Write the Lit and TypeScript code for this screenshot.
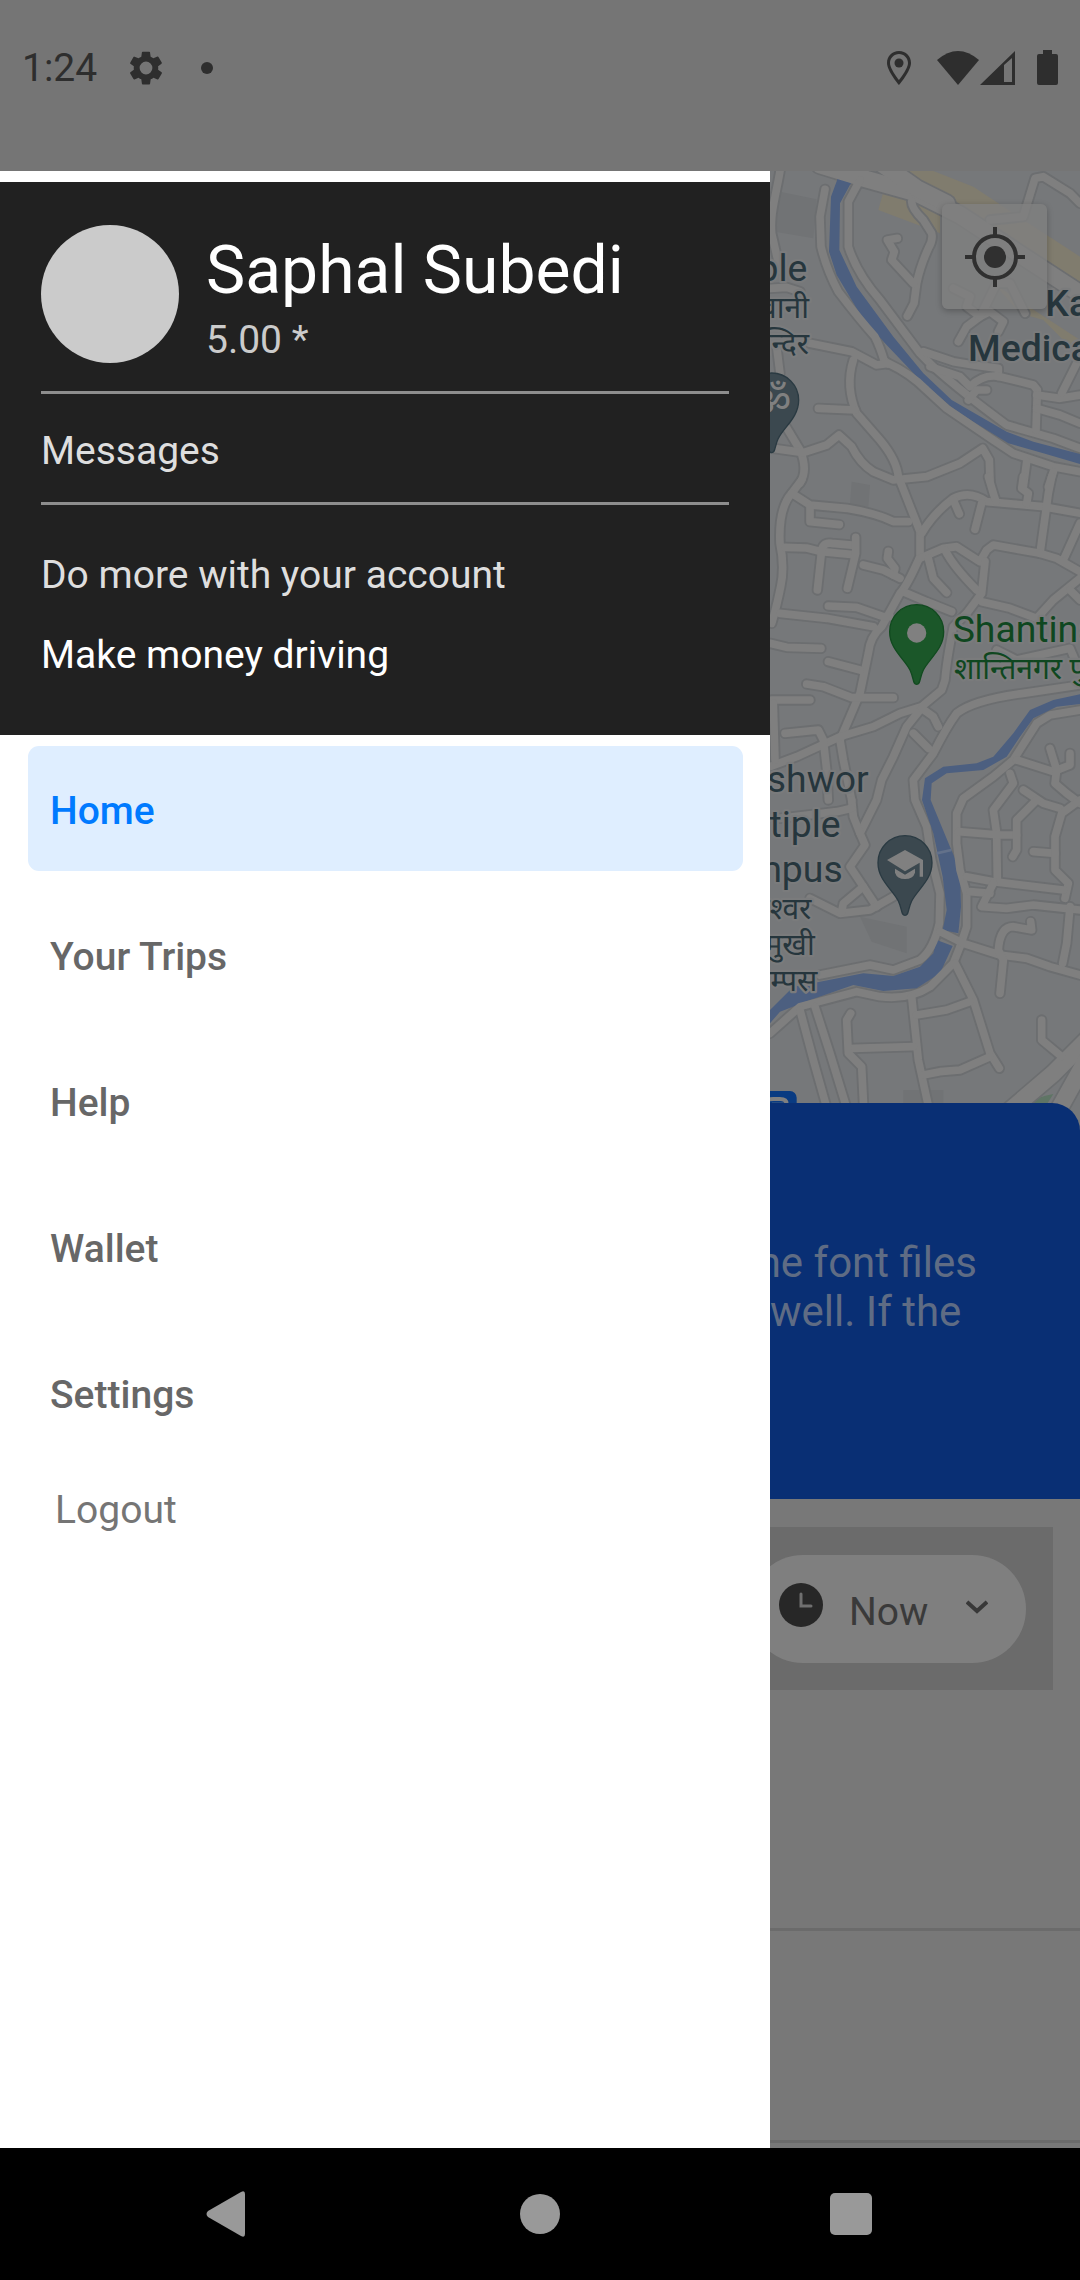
import { LitElement, html, svg, css } from "lit";
import { customElement, state } from "lit/decorators.js";

const ROADS = [
  // north
  "M60 33 C45 120 30 160 35 220 L60 330",
  "M195 88 L180 170 L183 260 Q200 330 235 395 Q300 480 345 530 Q360 560 372 600 L385 612",
  "M300 60 L265 125 L265 260 Q290 340 360 420 L480 580 L520 620 Q610 700 740 795 L880 835 L960 865",
  "M455 125 Q455 145 490 180 L515 220 Q520 240 505 265 Q480 320 470 370 L462 430 L442 468",
  "M412 235 L382 240 L403 275 L395 300 L460 370",
  "M150 550 L275 575 L350 615 L385 610 Q450 640 500 690 L560 745 L700 840 L760 880 L880 920 L960 935",
  "M280 600 Q255 680 290 760 L360 840 Q410 900 415 950",
  "M175 745 L285 750",
  "M60 770 L120 870 Q145 930 120 970",
  "M40 865 L130 878 L200 855 L237 825 L275 860 Q300 910 340 935 L400 960 L500 950 L600 910 L668 865 L688 900 L690 960",
  "M490 575 L580 605 L640 615 L715 625 L715 650",
  "M510 620 L600 650 L630 680 Q670 640 720 650 L820 675 L832 690 L828 810",
  "M830 705 L900 715 L960 705",
  "M830 745 L900 765 L960 790",
  "M960 590 L905 700",
  "M625 720 L650 690 L680 690",
  "M690 180 L790 170 L825 55 L850 50 L930 100 L960 130",
  "M800 905 L790 980",
  "M880 935 L865 980",
  "M595 545 L620 500 L660 470 L690 455 L730 485 L715 515",
  "M580 385 L630 410 L620 440 L660 470 L710 370 L750 370 L795 460",
  "M50 560 L60 640",
  "M30 385 L80 382 L120 395",
  // centre
  "M125 960 L95 1000 Q55 1045 60 1150 Q75 1220 62 1280 Q50 1340 35 1390",
  "M95 1000 L150 1035 L260 1045 Q350 1060 400 1085 L445 1085",
  "M415 950 L480 1115 L480 1190 Q440 1280 420 1300 L365 1400 Q330 1430 325 1480 L300 1600 L240 1740 L250 1800 L275 1920",
  "M150 1040 L150 1085 L238 1094",
  "M75 1162 L140 1164 L185 1175 L280 1184",
  "M172 1290 L185 1170 Q190 1145 215 1150 L285 1156",
  "M287 1132 L287 1180 L262 1285",
  "M385 1174 L382 1195 L405 1225 L400 1245",
  "M310 1215 L370 1230 L420 1255",
  "M205 1338 L290 1342 L370 1370 L390 1370",
  "M60 1360 L200 1375 L340 1400",
  "M30 1450 L80 1462 L183 1465",
  "M205 1505 L300 1530",
  "M140 1572 L190 1580 L275 1613 L400 1613",
  "M35 1620 L150 1620",
  "M485 1120 Q520 1060 580 1015 Q630 990 680 1025 L760 1032 L850 1040 L960 1060",
  "M580 1020 L598 1062",
  "M665 1030 L645 1108",
  "M685 950 L700 1000 L708 1025",
  "M790 950 L785 985 L805 1000 L800 1030",
  "M875 950 L865 1000 L840 1180",
  "M960 1090 L910 1200",
  "M480 1195 L550 1165 L590 1160 L660 1205 L680 1170 L700 1155 L840 1180 L890 1195 L960 1235",
  "M505 1195 L520 1255 L560 1298",
  "M555 1170 Q580 1220 650 1290",
  "M675 1205 L665 1300 L620 1360 L580 1400 Q560 1500 555 1560 L545 1590 L485 1640 L420 1660 L340 1700 L240 1730 L110 1790 L30 1820",
  "M665 1325 L750 1345 L830 1375 L880 1320 L960 1255",
  "M930 1290 L960 1320",
  "M430 1295 L500 1325 L575 1355",
  "M710 1470 L770 1500 L930 1465 L945 1500",
  "M960 1575 L790 1600 Q640 1620 590 1660 Q560 1700 520 1780 L460 1860 L465 1920 L500 2000 L515 2100 L540 2200 L538 2290 Q520 2370 480 2400 L400 2430 L330 2415 L180 2445",
  "M480 1650 L440 1700 L400 1790 L365 1860 L350 1920 L300 2020 L315 2055 L270 2120 L310 2180 L350 2240",
  "M485 1645 L520 1670 L535 1700",
  "M460 1720 L505 1765",
  "M75 1720 L175 1710 L190 1740 L200 1830 L205 1920",
  "M40 1630 L45 1800",
  "M960 1650 L870 1665 L830 1690 L760 1800 L700 1850 L610 1915 L590 1960 L590 2050 L600 2130 L620 2200 L620 2300 L600 2360 L580 2410 L510 2480 Q450 2520 360 2510 L290 2495 L120 2540 L30 2620",
  "M770 1800 L880 1835 L930 1815 L930 1780",
  "M870 1765 L890 1830 L885 1870 L920 1900 L960 1930",
  "M750 1840 L760 1870 L700 1950 L710 2020 L712 2160",
  "M790 1890 L850 1930 L900 1945",
  // south
  "M275 1920 L280 1970 L300 2020",
  "M60 1975 L230 1955 L275 1945",
  "M595 2015 L720 2025 L770 2025",
  "M830 1920 L770 1980 L770 2070 L758 2090",
  "M820 2075 L885 2080",
  "M960 1920 L905 1960 L885 2030 L885 2130 L925 2170 L915 2215",
  "M620 2150 L700 2165 L910 2190",
  "M630 2195 L690 2200",
  "M700 2170 L665 2240 L740 2245 L820 2235 L960 2250",
  "M930 2240 L920 2350 L908 2410",
  "M540 2315 L610 2350 L720 2385 L800 2395 L870 2420 L960 2445",
  "M812 2285 L815 2310 L760 2300 Q720 2300 715 2370 L730 2400 L720 2500",
  "M585 2410 L640 2520 L690 2680 L718 2725",
  "M455 2510 L475 2700 L510 2860",
  "M470 2565 L560 2550 L630 2525",
  "M280 2665 L460 2660",
  "M490 2745 L540 2735 L600 2730 L690 2690",
  "M272 2560 L260 2580 L265 2680 L305 2720 L312 2860",
  "M120 2550 L160 2700 L205 2860",
  "M165 2540 L210 2680 L265 2860",
  "M845 2580 L845 2640 L905 2690",
  "M150 2215 L240 2260 L330 2250 L400 2210",
  "M310 2180 L250 2230 L245 2255",
];

const HIGHWAYS = [
  "M180 15 L320 58 L470 100 L600 165 L760 270 L990 420",
  "M370 15 L470 85 L560 130",
  "M990 2630 L880 2740 L740 2860",
  "M990 2680 L890 2860",
];

const RIVERS = [
  "M235 50 L275 65 L240 130 L238 270 L290 380 L400 530 L490 640 L575 720 L740 815 L820 845 L960 882 V912 L850 880 L745 850 L640 785 L575 742 L480 660 L375 550 L305 470 L230 345 L207 275 L213 110 Z",
  "M960 1603 L880 1620 L810 1650 L760 1720 L700 1790 L650 1810 L550 1820 L495 1855 L486 1920 L520 2020 L548 2150 L560 2250 L548 2310 L595 2320 L603 2240 L600 2130 L570 2060 L512 1920 L515 1870 L560 1840 L670 1830 L740 1790 L780 1730 L820 1675 L890 1640 L960 1632 Z",
  "M530 2340 L578 2358 L540 2440 L470 2485 L370 2493 L280 2475 L150 2520 L60 2555 L30 2590 V2550 L100 2480 L180 2465 L310 2440 L400 2448 L480 2420 L520 2380 Z",
];

const PIN =
  "M0 158 C-12 158 -8 140 -20 115 C-38 80 -81 52 -81 0 A81 81 0 1 1 81 0 C81 52 38 80 20 115 C8 140 12 158 0 158 Z";

@customElement("city-map")
export class CityMap extends LitElement {
  static styles = css`
    :host {
      display: block;
      height: 960px;
      overflow: hidden;
      background: #76787a;
    }
    .canvas {
      display: block;
      width: 100%;
      height: 100%;
    }
    .park { fill: #807c6e; }
    .block { fill: #717375; }
    .green { fill: #5f7565; }
    .river { fill: #4c5f80; }
    .casing, .road { fill: none; stroke-linecap: round; stroke-linejoin: round; }
    .casing { stroke: #6c6e70; stroke-width: 34; }
    .road { stroke: #7f7f7f; stroke-width: 23; }
    .casing.wide { stroke-width: 60; }
    .road.wide { stroke-width: 50; }
    .bridge { stroke: #63718a; stroke-width: 8; }
    .label {
      font-family: Roboto, "Noto Sans", sans-serif;
      font-size: 112px;
      fill: #26363d;
      stroke: #7a7b7c;
      stroke-width: 14px;
      stroke-linejoin: round;
      paint-order: stroke;
    }
    .end { text-anchor: end; }
    .strong { font-weight: 500; }
    .native { font-size: 90px; }
    .grove { fill: #0f4720; }
    .pin { fill: #3b484f; stroke: #2a3a42; stroke-width: 4; }
    .pin.grove { fill: #1b5729; stroke: #114a1f; }
    .glyph { fill: #808080; }
    .om { font-family: "Noto Sans", sans-serif; font-size: 124px; text-anchor: middle; }
    .stop { fill: #093b82; }
    .bus { fill: none; stroke: #808080; stroke-width: 12; }
  `;

  render() {
    return html`
      <svg class="canvas" viewBox="30 33 930 2880" preserveAspectRatio="xMaxYMin slice" role="img" aria-label="Map">
        <path class="block" d="M60 95 L170 118 L160 235 L45 215 Z M275 965 L330 975 L325 1040 L270 1032 Z M300 2270 L440 2300 V2380 L335 2345 Z M430 2790 H550 V2860 H430 Z"></path>
        <path class="park" d="M390 33 H520 L640 80 L760 160 L960 290 V400 L860 310 L760 250 L540 160 L540 220 L355 150 L370 95 L460 100 Z M700 370 L960 540 L930 560 L850 480 L780 460 Z"></path>
        <path class="green" d="M800 2835 Q830 2810 880 2802 L850 2850 Z"></path>
        ${HIGHWAYS.map((d) => svg`<path class="casing wide" d=${d}></path>`)}
        ${ROADS.map((d) => svg`<path class="casing" d=${d}></path>`)}
        ${RIVERS.map((d) => svg`<path class="river" d=${d}></path>`)}
        ${HIGHWAYS.map((d) => svg`<path class="road wide" d=${d}></path>`)}
        ${ROADS.map((d) => svg`<path class="road" d=${d}></path>`)}
        <path class="bridge" d="M530 2080 L574 2070"></path>

        <text class="label end" x="142" y="364">Temple</text>
        <text class="label native end" x="147" y="474">भवानी</text>
        <text class="label native end" x="147" y="582">मन्दिर</text>
        <text class="label strong" x="856" y="468">Kat</text>
        <text class="label strong" x="624" y="603">Medical</text>
        <text class="label grove" x="578" y="1446">Shantinagar</text>
        <text class="label native grove" x="582" y="1556">शान्तिनगर पुल</text>
        <text class="label end" x="326" y="1895">eshwor</text>
        <text class="label end" x="242" y="2030">Multiple</text>
        <text class="label end" x="248" y="2165">Campus</text>
        <text class="label native end" x="154" y="2276">नेश्वर</text>
        <text class="label native end" x="164" y="2384">बहुमुखी</text>
        <text class="label native end" x="172" y="2492">क्याम्पस</text>

        <g transform="translate(35 720)">
          <path class="pin" d=${PIN}></path>
          <text class="glyph om" x="2" y="48">ॐ</text>
        </g>
        <g transform="translate(470 1415)">
          <path class="pin grove" d=${PIN}></path>
          <circle class="glyph" cx="0" cy="4" r="29"></circle>
        </g>
        <g transform="translate(435 2108)">
          <path class="pin" d=${PIN}></path>
          <path class="glyph" d="M-54 -8 L0 -38 L54 -8 V42 H44 V0 L0 26 Z M-30 18 L0 36 L30 18 V30 Q24 49 0 49 Q-24 49 -30 30 Z"></path>
        </g>
        <rect class="stop" x="-40" y="2793" width="150" height="90" rx="20"></rect>
        <path class="bus" d="M10 2850 V2835 Q10 2817 40 2817 H60 Q80 2817 80 2832 V2850 M36 2834 H78"></path>
      </svg>
    `;
  }
}

@customElement("app-root")
export class AppRoot extends LitElement {
  @state() private current = "Home";

  private readonly destinations = ["Home", "Your Trips", "Help", "Wallet", "Settings"];

  static styles = css`
    :host {
      display: grid;
      grid-template-rows: auto 1fr auto;
      min-height: 100vh;
      background: #787878;
      font-family: Roboto, "Liberation Sans", sans-serif;
      font-size: 39px;
      line-height: 46px;
    }
    *, *::before, *::after { box-sizing: border-box; }
    button {
      border: 0;
      padding: 0;
      background: none;
      color: inherit;
      font: inherit;
      text-align: left;
      cursor: pointer;
    }
    svg { display: block; flex: none; }

    .status {
      display: flex;
      justify-content: space-between;
      padding: 45px 22px 80px;
      background: #757575;
      color: #2e2e2e;
      fill: #2e2e2e;
    }
    .cluster { display: flex; align-items: center; }
    .notices { gap: 31px; }
    .signals { gap: 21px; }
    .radio { display: flex; gap: 1px; padding-left: 4px; }

    .body {
      display: grid;
      grid-template-columns: 770fr 310fr;
      min-width: 0;
    }

    .drawer { padding-top: 11px; background: #fff; color: #676767; }
    .profile {
      display: flex;
      flex-direction: column;
      padding: 43px 41px 57px;
      background: #212121;
      color: #dedede;
    }
    .person {
      display: flex;
      align-items: flex-start;
      gap: 27px;
      padding-bottom: 24px;
      border-bottom: 3px solid #8e8e8e;
    }
    .avatar { flex: none; width: 138px; height: 138px; border-radius: 50%; background: #cbcbcb; }
    .name { margin: 0; padding-top: 7px; font-size: 66px; line-height: 78px; font-weight: 400; color: #fff; }
    .rating { margin: 0; padding-top: 7px; padding-bottom: 4px; color: #cbcbcb; }
    .messages { padding: 34px 0 28px; border-bottom: 3px solid #8e8e8e; }
    .more { margin: 0; padding: 47px 0 34px; }
    .earn { color: #fff; }

    .menu {
      display: flex;
      flex-direction: column;
      gap: 21px;
      margin: 0;
      padding: 11px 27px 32px 28px;
      list-style: none;
    }
    .item {
      display: flex;
      align-items: center;
      width: 100%;
      height: 125px;
      padding: 4px 22px 0;
      border-radius: 11px;
      font-weight: 500;
    }
    .item[aria-current="page"] { background: #dfeeff; color: #007aff; }
    .logout { display: block; margin: 0 55px; color: #757575; }

    .screen { display: flex; flex-direction: column; overflow: hidden; min-width: 0; }
    .map { position: relative; }
    .locate {
      position: absolute;
      top: 33px;
      right: 33px;
      display: grid;
      place-items: center;
      width: 105px;
      height: 105px;
      border-radius: 6px;
      background: rgba(128, 128, 128, 0.8);
      box-shadow: 0 2px 6px rgba(0, 0, 0, 0.25);
    }
    .banner {
      position: relative;
      height: 396px;
      margin-top: -28px;
      padding-top: 135px;
      border-top-right-radius: 28px;
      background: #092f74;
      color: #5f6c84;
      font-size: 42px;
      line-height: 49px;
      white-space: nowrap;
    }
    .tip { margin: 0; text-indent: -26px; }
    .tip.second { text-indent: 0; }
    .when {
      display: flex;
      margin: 28px 27px 238px 0;
      padding: 28px 27px 27px 0;
      background: #6b6b6b;
    }
    .picker {
      display: flex;
      flex: 1;
      align-items: center;
      height: 108px;
      margin-left: -21px;
      padding: 0 38px 0 30px;
      border-radius: 54px;
      background: #7f7f7f;
      color: #3a3a3a;
    }
    .choice { flex: 1; padding: 6px 0 0 26px; }
    .place { height: 212px; border-top: 3px solid #6b6b6b; }
    .place.next { height: 7px; }

    .keys {
      display: grid;
      grid-template-columns: repeat(3, 1fr);
      padding: 0 73px;
      background: #000;
      fill: #999;
    }
    .key { display: grid; place-items: center; height: 132px; }
  `;

  private renderStatus() {
    return html`
      <header class="status">
        <div class="cluster notices">
          <time>1:24</time>
          <svg width="36" height="36" viewBox="1 1 22 22" aria-hidden="true">
            <path d="M19.4 13a7.500 7.500 0 0 0 0-2l2.100-1.650a.5.5 0 0 0 .12-.64l-2-3.460a.5.5 0 0 0-.61-.22l-2.490 1a7.300 7.300 0 0 0-1.690-.98l-.38-2.650A.49.49 0 0 0 14 2h-4a.49.49 0 0 0-.49.42l-.38 2.650c-.61.25-1.170.59-1.690.98l-2.490-1a.5.5 0 0 0-.61.22l-2 3.460a.49.49 0 0 0 .12.64L4.570 11a7.900 7.900 0 0 0 0 2l-2.110 1.650a.5.5 0 0 0-.12.64l2 3.460c.12.22.39.3.61.22l2.490-1c.52.4 1.080.73 1.690.98l.38 2.650c.03.24.24.42.49.42h4c.25 0 .46-.18.49-.42l.38-2.650c.61-.25 1.170-.59 1.690-.98l2.490 1c.23.09.49 0 .61-.22l2-3.460a.5.500 0 0 0-.12-.64zM12 15.900a3.900 3.900 0 1 1 0-7.800 3.900 3.900 0 0 1 0 7.800z"></path>
          </svg>
          <svg width="22" height="14" viewBox="0 0 22 14" aria-hidden="true"><circle cx="12" cy="7" r="6"></circle></svg>
        </div>
        <div class="cluster signals">
          <svg width="26" height="36" viewBox="0 0 26 36" aria-hidden="true">
            <path fill-rule="evenodd" d="M13 1C6 1 1 6 1 13C1 21 13 35 13 35C13 35 25 21 25 13C25 6 20 1 13 1ZM13 4C18 4 22 8 22 13C22 19 13 30 13 30C13 30 4 19 4 13C4 8 8 4 13 4Z"></path>
            <circle cx="13" cy="13" r="4.500"></circle>
          </svg>
          <div class="radio">
            <svg width="42" height="36" viewBox="0 0 42 36" aria-hidden="true"><path d="M0 10Q21 -8 42 10L21 35Z"></path></svg>
            <svg width="36" height="36" viewBox="0 0 36 36" aria-hidden="true"><path fill-rule="evenodd" d="M0 35L35 1V35ZM24 15V32H32V8Z"></path></svg>
          </div>
          <svg width="21" height="36" viewBox="0 0 21 36" aria-hidden="true"><path d="M6 0H15V4H19Q21 4 21 6V33Q21 35 19 35H2Q0 35 0 33V6Q0 4 2 4H6Z"></path></svg>
        </div>
      </header>
    `;
  }

  private renderDrawer() {
    return html`
      <aside class="drawer">
        <section class="profile">
          <div class="person">
            <div class="avatar"></div>
            <div>
              <h1 class="name">Saphal Subedi</h1>
              <p class="rating">5.00 *</p>
            </div>
          </div>
          <button class="messages">Messages</button>
          <p class="more">Do more with your account</p>
          <button class="earn">Make money driving</button>
        </section>
        <nav aria-label="Main">
          <ul class="menu">
            ${this.destinations.map(
              (name) => html`
                <li>
                  <button
                    class="item"
                    aria-current=${name === this.current ? "page" : "false"}
                    @click=${() => (this.current = name)}
                  >${name}</button>
                </li>
              `,
            )}
          </ul>
        </nav>
        <button class="logout">Logout</button>
      </aside>
    `;
  }

  private renderScreen() {
    return html`
      <main class="screen">
        <div class="map">
          <city-map></city-map>
          <button class="locate" aria-label="My location">
            <svg width="60" height="60" viewBox="0 0 60 60" fill="none" stroke="#303030">
              <circle cx="30" cy="30" r="21" stroke-width="4"></circle>
              <circle cx="30" cy="30" r="11" fill="#303030" stroke="none"></circle>
              <path stroke-width="4" d="M30 0V9M30 51V60M0 30H9M51 30H60"></path>
            </svg>
          </button>
        </div>
        <section class="banner">
          <p class="tip">the font files</p>
          <p class="tip second">well. If the</p>
        </section>
        <div class="when">
          <button class="picker">
            <svg width="44" height="52" viewBox="0 0 44 52" aria-hidden="true">
              <circle cx="22" cy="22" r="22" fill="#272727"></circle>
              <path d="M22 11V23H32" fill="none" stroke="#6f6f6f" stroke-width="3" stroke-linecap="round"></path>
            </svg>
            <span class="choice">Now</span>
            <svg width="22" height="20" viewBox="0 0 22 20" aria-hidden="true">
              <path d="M1 3L11 12L21 3" fill="none" stroke="#383838" stroke-width="4"></path>
            </svg>
          </button>
        </div>
        <div class="place"></div>
        <div class="place next"></div>
      </main>
    `;
  }

  render() {
    return html`
      ${this.renderStatus()}
      <div class="body">${this.renderDrawer()} ${this.renderScreen()}</div>
      <footer class="keys">
        <button class="key" aria-label="Back">
          <svg width="46" height="46" viewBox="0 0 46 46"><path d="M35 1Q39 -1 39 3V43Q39 47 35 45L2 26Q-1 23 2 20Z"></path></svg>
        </button>
        <button class="key" aria-label="Home screen">
          <svg width="42" height="42" viewBox="0 0 42 42"><circle cx="21" cy="21" r="20"></circle></svg>
        </button>
        <button class="key" aria-label="Recent apps">
          <svg width="42" height="42" viewBox="0 0 42 42"><rect width="42" height="42" rx="5"></rect></svg>
        </button>
      </footer>
    `;
  }
}
